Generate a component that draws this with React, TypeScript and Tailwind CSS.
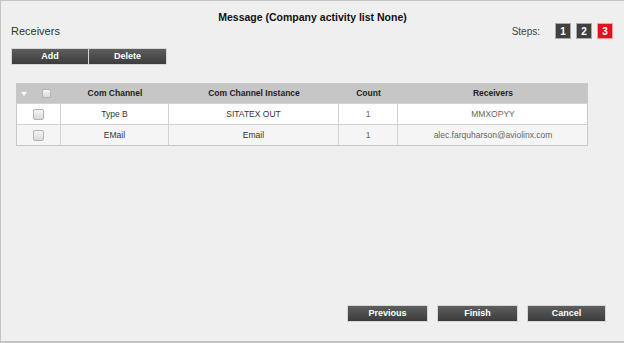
const btn =
  "h-[17px] border border-[#d6d6d6] bg-gradient-to-b from-[#5e5e5e] to-[#3c3c3c] text-white font-bold text-[9px] leading-[15px] text-center";

function Check({ small }: { small?: boolean }) {
  return (
    <span
      className={
        (small ? "w-[9px] h-[9px]" : "w-[11px] h-[11px]") +
        " inline-block rounded-[2px] border border-[#b4b4b4] bg-gradient-to-b from-[#f6f6f6] to-[#d9d9d9]"
      }
    />
  );
}

const cols = "grid grid-cols-[44px_108px_170px_59px_190px]";

const rows = [
  { ch: "Type B", inst: "SITATEX OUT", count: "1", rec: "MMXOPYY", bg: "bg-white" },
  { ch: "EMail", inst: "Email", count: "1", rec: "alec.farquharson@aviolinx.com", bg: "bg-[#f5f5f5]" },
];

export default function App() {
  return (
    <div
      className="w-[624px] h-[343px] flex flex-col border-l border-t border-b-2 border-[#c4c4c4] bg-[#efefef] text-[#333]"
      style={{ fontFamily: '"Liberation Sans", Arial, sans-serif' }}
    >
      <div className="mt-[10px] text-center font-bold text-[10.5px] leading-[13px] text-[#111]">
        Message (Company activity list None)
      </div>
      <div className="flex items-center justify-between pl-[10px] pr-[11px] mt-[-1px] h-[16px]">
        <span className="text-[11px] text-[#333]">Receivers</span>
        <div className="flex items-center">
          <span className="text-[10px] text-[#444] mr-[15px]">Steps:</span>
          <div className="flex gap-[5px]">
            <span className="w-[16px] h-[16px] flex items-center justify-center border border-[#aaa] bg-[#404040] text-white text-[10px] font-bold">1</span>
            <span className="w-[16px] h-[16px] flex items-center justify-center border border-[#aaa] bg-[#404040] text-white text-[10px] font-bold">2</span>
            <span className="w-[16px] h-[16px] flex items-center justify-center border border-[#f5a0a0] bg-[#e3101d] text-white text-[10px] font-bold">3</span>
          </div>
        </div>
      </div>
      <div className="flex ml-[10px] mt-[9px]">
        <div className={btn + " w-[78px]"}>Add</div>
        <div className={btn + " w-[78px] border-l-0"}>Delete</div>
      </div>
      <div className="ml-[15px] mt-[18px] w-[572px] border border-[#c8c8c8]">
        <div className={cols + " h-[19px] bg-[#c6c6c6] font-bold text-[8.5px] text-[#222]"}>
          <div className="flex items-center">
            <svg width="6" height="4" viewBox="0 0 6 4" className="ml-[4px]">
              <path d="M0 0H6L3 4Z" fill="#fff" />
            </svg>
            <span className="ml-[15px] flex">
              <Check small />
            </span>
          </div>
          <div className="flex items-center justify-center">Com Channel</div>
          <div className="flex items-center justify-center">Com Channel Instance</div>
          <div className="flex items-center justify-center">Count</div>
          <div className="flex items-center justify-center">Receivers</div>
        </div>
        {rows.map((r) => (
          <div key={r.ch} className={cols + " h-[21px] border-t border-[#d2d2d2] text-[8.5px] " + r.bg}>
            <div className="flex items-center justify-center border-r border-[#d2d2d2]">
              <Check />
            </div>
            <div className="flex items-center justify-center border-r border-[#d2d2d2] text-[#333]">{r.ch}</div>
            <div className="flex items-center justify-center border-r border-[#d2d2d2] text-[#333]">{r.inst}</div>
            <div className="flex items-center justify-center border-r border-[#d2d2d2] text-[#666]">{r.count}</div>
            <div className="flex items-center justify-center text-[#666]">{r.rec}</div>
          </div>
        ))}
      </div>
      <div className="mt-auto flex justify-end gap-[9px] pr-[18px] pb-[19px]">
        <div className={btn + " w-[81px]"}>Previous</div>
        <div className={btn + " w-[81px]"}>Finish</div>
        <div className={btn + " w-[79px]"}>Cancel</div>
      </div>
    </div>
  );
}
